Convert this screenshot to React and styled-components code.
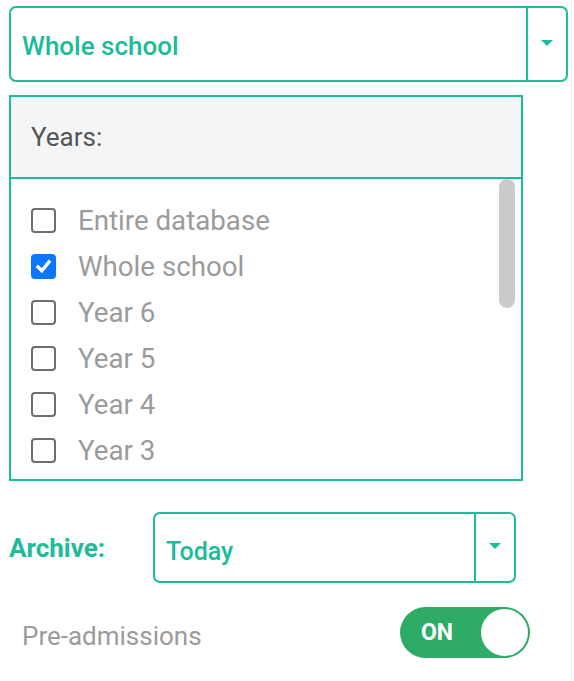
import React from 'react';
import styled, { createGlobalStyle } from 'styled-components';

const GlobalStyle = createGlobalStyle`
	body {
		margin: 0;
		background: #fff;
		font-family: Roboto, "Liberation Sans", sans-serif;
	}
`;

const TEAL = '#1dbb97';

const years = [
	{ label: 'Entire database', checked: false },
	{ label: 'Whole school', checked: true },
	{ label: 'Year 6', checked: false },
	{ label: 'Year 5', checked: false },
	{ label: 'Year 4', checked: false },
	{ label: 'Year 3', checked: false },
];

const Caret = () => (
	<svg width="12" height="7" viewBox="0 0 12 7">
		<path d="M0 0 L12 0 L6 6 Z" fill={TEAL} />
	</svg>
);

const Check = () => (
	<svg width="19" height="19" viewBox="0 0 19 19">
		<path d="M4 10 L7.8 13.8 L15 5" fill="none" stroke="#fff" strokeWidth="3.4" strokeLinecap="square" />
	</svg>
);

const App = () => {
	return (
		<>
			<GlobalStyle />
			<Page>
				<Select height={76} width={559}>
					<SelectValue size={26} shift={3}>Whole school</SelectValue>
					<CaretCell width={38}><Caret /></CaretCell>
				</Select>

				<Panel>
					<PanelHeader>Years:</PanelHeader>
					<List>
						{years.map((y) => (
							<Row key={y.label}>
								<Box checked={y.checked}>{y.checked && <Check />}</Box>
								<RowLabel>{y.label}</RowLabel>
							</Row>
						))}
						<ScrollThumb />
					</List>
				</Panel>

				<ArchiveRow>
					<ArchiveLabel>Archive:</ArchiveLabel>
					<Select height={71} width={363}>
						<SelectValue size={25} shift={7}>Today</SelectValue>
						<CaretCell width={38}><Caret /></CaretCell>
					</Select>
				</ArchiveRow>

				<ToggleRow>
					<ToggleLabel>Pre-admissions</ToggleLabel>
					<Toggle>
						<ToggleText>ON</ToggleText>
						<Knob />
					</Toggle>
				</ToggleRow>
			</Page>
		</>
	);
};

export default App;

const Page = styled.div`
	width: 572px;
	height: 100vh;
	box-sizing: border-box;
	border-right: 1px solid #ececec;
	padding: 6px 0 0 9px;
`;

const Select = styled.div`
	display: flex;
	box-sizing: border-box;
	width: ${(p) => p.width}px;
	height: ${(p) => p.height}px;
	border: 2px solid ${TEAL};
	border-radius: 7px;
`;

const SelectValue = styled.div`
	flex: 1;
	display: flex;
	align-items: center;
	padding-left: 11px;
	padding-top: ${(p) => p.shift}px;
	font-size: ${(p) => p.size}px;
	font-weight: 500;
	color: ${TEAL};
`;

const CaretCell = styled.div`
	width: ${(p) => p.width}px;
	border-left: 2px solid ${TEAL};
	display: flex;
	align-items: center;
	justify-content: center;
	padding-bottom: 2px;
`;

const Panel = styled.div`
	margin-top: 13px;
	width: 514px;
	box-sizing: border-box;
	border: 2px solid ${TEAL};
`;

const PanelHeader = styled.div`
	height: 80px;
	display: flex;
	align-items: center;
	padding-left: 20px;
	background: #f4f5f7;
	border-bottom: 2px solid ${TEAL};
	font-size: 26px;
	color: #555;
`;

const List = styled.div`
	position: relative;
	height: 300px;
	overflow: hidden;
	box-sizing: border-box;
	padding-top: 18px;
`;

const Row = styled.div`
	height: 46px;
	display: flex;
	align-items: center;
	padding-left: 20px;
`;

const Box = styled.div`
	width: 25px;
	height: 25px;
	box-sizing: border-box;
	border-radius: 4px;
	border: ${(p) => (p.checked ? 'none' : '2px solid #6e6e6e')};
	background: ${(p) => (p.checked ? '#0b76ff' : '#fff')};
	display: flex;
	align-items: center;
	justify-content: center;
`;

const RowLabel = styled.span`
	margin-left: 22px;
	font-size: 27.7px;
	color: #9b9b9b;
`;

const ScrollThumb = styled.div`
	position: absolute;
	top: 0;
	right: 6px;
	width: 16px;
	height: 129px;
	border-radius: 8px;
	background: #cbcbcb;
`;

const ArchiveRow = styled.div`
	display: flex;
	align-items: center;
	margin-top: 31px;
`;

const ArchiveLabel = styled.div`
	width: 144px;
	font-size: 26px;
	font-weight: 700;
	color: ${TEAL};
`;

const ToggleRow = styled.div`
	display: flex;
	align-items: center;
	justify-content: space-between;
	width: 521px;
	margin-top: 24px;
	padding-left: 13px;
	box-sizing: border-box;
`;

const ToggleLabel = styled.span`
	font-size: 26px;
	color: #9b9b9b;
	padding-top: 7px;
`;

const Toggle = styled.div`
	width: 130px;
	height: 51px;
	box-sizing: border-box;
	border-radius: 26px;
	background: #2eab66;
	display: flex;
	align-items: center;
	justify-content: space-between;
	padding: 0 2px 0 21px;
`;

const ToggleText = styled.span`
	font-size: 23px;
	font-weight: 700;
	color: #fff;
`;

const Knob = styled.div`
	width: 47px;
	height: 47px;
	border-radius: 50%;
	background: #fff;
`;
